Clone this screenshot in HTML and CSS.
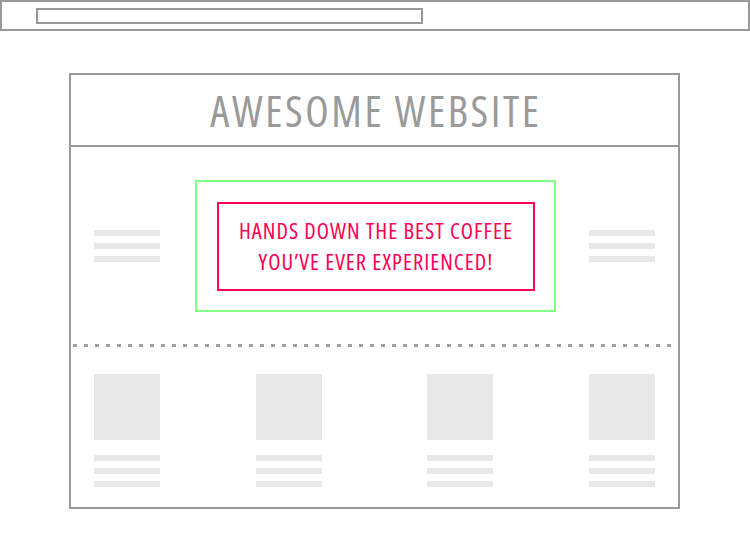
FILE: index.html
```html
<!DOCTYPE html>
<html lang="en">
<head>
<meta charset="utf-8">
<title>Awesome Website wireframe</title>
<link rel="stylesheet" href="styles.css">
</head>
<body>
  <div class="browser-bar">
    <div class="url-field"></div>
  </div>
  <div class="frame">
    <header class="site-header">
      <h1 class="site-title">AWESOME WEBSITE</h1>
    </header>
    <section class="hero">
      <div class="text-lines">
        <span class="line"></span><span class="line"></span><span class="line"></span>
      </div>
      <div class="hero-outer">
        <div class="hero-inner">
          <p class="hero-text">HANDS DOWN THE BEST COFFEE<br>YOU’VE EVER EXPERIENCED!</p>
        </div>
      </div>
      <div class="text-lines">
        <span class="line"></span><span class="line"></span><span class="line"></span>
      </div>
    </section>
    <div class="divider"></div>
    <section class="cards">
      <div class="card-group">
        <div class="card">
          <div class="thumb"></div>
          <div class="text-lines"><span class="line"></span><span class="line"></span><span class="line"></span></div>
        </div>
        <div class="card">
          <div class="thumb"></div>
          <div class="text-lines"><span class="line"></span><span class="line"></span><span class="line"></span></div>
        </div>
      </div>
      <div class="card-group">
        <div class="card">
          <div class="thumb"></div>
          <div class="text-lines"><span class="line"></span><span class="line"></span><span class="line"></span></div>
        </div>
        <div class="card">
          <div class="thumb"></div>
          <div class="text-lines"><span class="line"></span><span class="line"></span><span class="line"></span></div>
        </div>
      </div>
    </section>
  </div>
</body>
</html>
```

FILE: styles.css
```css
* {
  box-sizing: border-box;
}

html, body {
  margin: 0;
  padding: 0;
  background: #ffffff;
}

body {
  width: 750px;
  height: 550px;
  font-family: "Open Sans", "DejaVu Sans", sans-serif;
}

.browser-bar {
  width: 750px;
  height: 31px;
  border: 2px solid #999999;
  padding: 6px 0 0 34px;
}

.url-field {
  width: 387px;
  height: 16px;
  border: 2px solid #999999;
}

.frame {
  width: 611px;
  height: 436px;
  margin: 42px 0 0 69px;
  border: 2px solid #999999;
  display: flex;
  flex-direction: column;
}

.site-header {
  height: 72px;
  border-bottom: 2px solid #999999;
  display: flex;
  align-items: center;
  justify-content: center;
}

.site-title {
  margin: 0;
  font-family: "Open Sans", sans-serif;
  font-stretch: 75%;
  font-weight: 500;
  font-size: 43px;
  letter-spacing: 2.6px;
  color: #9a9a9a;
  line-height: 1;
  padding-left: 3px;
}

.hero {
  height: 197px;
  display: flex;
  align-items: center;
  padding: 0 23px;
}

.text-lines {
  display: flex;
  flex-direction: column;
  gap: 7px;
  width: 66px;
  flex-shrink: 0;
}

.line {
  display: block;
  height: 6px;
  background: #e8e8e8;
}

.hero-outer {
  width: 361px;
  height: 132px;
  flex-shrink: 0;
  margin: 0 33px 0 35px;
  border: 2px solid #80ff80;
  padding: 20px 19px 19px 20px;
}

.hero-inner {
  width: 100%;
  height: 100%;
  border: 2px solid #ff0055;
  display: flex;
  align-items: center;
  justify-content: center;
}

.hero-text {
  margin: 0;
  font-family: "Open Sans", sans-serif;
  font-stretch: 75%;
  font-weight: 400;
  font-size: 22.5px;
  line-height: 31px;
  letter-spacing: 1px;
  color: #ff0055;
  text-align: center;
}

.divider {
  height: 3px;
  margin: 0 2px;
  background: repeating-linear-gradient(to right, #a0a0a0 0, #a0a0a0 4px, transparent 4px, transparent 11px);
}

.cards {
  display: flex;
  justify-content: space-between;
  padding: 27px 23px 20px;
}

.card-group {
  display: flex;
  gap: 96px;
}

.card {
  width: 66px;
  display: flex;
  flex-direction: column;
  gap: 15px;
}

.thumb {
  width: 66px;
  height: 66px;
  background: #e8e8e8;
}
```
